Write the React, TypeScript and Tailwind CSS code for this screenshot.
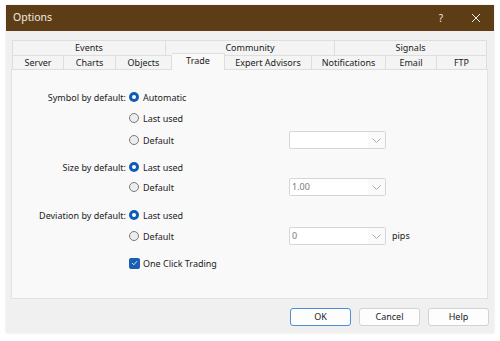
import React from "react";

const F = { fontFamily: '"Noto Sans", "Open Sans", Arial, sans-serif' };

function Radio({ checked, label }: { checked?: boolean; label: string }) {
  return (
    <div className="flex items-center gap-[4px]">
      {checked ? (
        <span className="w-[10px] h-[10px] rounded-full bg-[#0f5bb8] flex items-center justify-center">
          <span className="w-[4px] h-[4px] rounded-full bg-white" />
        </span>
      ) : (
        <span className="w-[10px] h-[10px] rounded-full border border-[#7b7b7b] bg-[#ededed]" />
      )}
      <span className="text-[9px] text-[#222] leading-none">{label}</span>
    </div>
  );
}

function Combo({ value }: { value?: string }) {
  return (
    <div className="w-[97px] h-[18px] rounded-[2px] border border-[#d6d6d6] bg-white flex items-center">
      <div className="flex-1 h-full flex items-center pl-[2px] text-[9px] text-[#7a7a7a]">{value}</div>
      <div className="w-[17px] h-full flex items-center justify-center bg-[#fafafa]">
        <svg width="9" height="5" viewBox="0 0 9 5">
          <path d="M0.5 0.5 L4.5 4.5 L8.5 0.5" fill="none" stroke="#a8a8a8" strokeWidth="1" />
        </svg>
      </div>
    </div>
  );
}

function Label({ text }: { text?: string }) {
  return <div className="text-right pr-[3px] text-[9px] text-[#222] leading-none">{text}</div>;
}

function Row({ label, children, combo, pips, mt }: { label?: string; children: React.ReactNode; combo?: React.ReactNode; pips?: boolean; mt: string }) {
  return (
    <div className={`grid grid-cols-[117px_160px_97px_auto] items-center h-[20px] ${mt}`}>
      <Label text={label} />
      <div>{children}</div>
      <div>{combo}</div>
      <div className="pl-[6px] text-[9px] text-[#222]">{pips ? "pips" : ""}</div>
    </div>
  );
}

export default function App() {
  const row1 = [
    { t: "Events", w: "w-[154px]" },
    { t: "Community", w: "w-[169px]" },
    { t: "Signals", w: "w-[152px]" },
  ];
  const row2 = [
    { t: "Server", w: "w-[52px]" },
    { t: "Charts", w: "w-[52px]" },
    { t: "Objects", w: "w-[56px]" },
    { t: "Trade", w: "w-[53px]", sel: true },
    { t: "Expert Advisors", w: "w-[87px]" },
    { t: "Notifications", w: "w-[74px]" },
    { t: "Email", w: "w-[51px]" },
    { t: "FTP", w: "w-[50px]" },
  ];
  return (
    <div className="w-[500px] h-[341px] bg-white pt-[5px] px-[6px]" style={F}>
      <div className="w-[488px] h-[328px] flex flex-col shadow-[0_0_2px_rgba(0,0,0,0.12)]">
        <div className="h-[26px] bg-[#5d3d15] flex items-center pl-[7px] text-[#f1ebe3]">
          <span className="text-[10.5px] flex-1">Options</span>
          <span className="text-[10px] w-[20px] text-center mr-[20px]">?</span>
          <svg width="10" height="10" viewBox="0 0 10 10" className="mr-[13px]">
            <path d="M1 1 L9 9 M9 1 L1 9" stroke="#f1ebe3" strokeWidth="1" />
          </svg>
        </div>
        <div className="flex-1 bg-[#f0f0f0] pt-[9px] px-[5px] flex flex-col">
          <div className="ml-[1px] w-[475px] flex h-[15px]">
            {row1.map((r, i) => (
              <div
                key={r.t}
                className={`${r.w} h-full bg-[#f4f4f4] border-t border-r border-[#dedede] ${i === 0 ? "border-l" : ""} flex items-center justify-center text-[9px] text-[#222]`}
              >
                {r.t}
              </div>
            ))}
          </div>
          <div className="ml-[1px] w-[475px] flex h-[15px] items-end relative z-10">
            {row2.map((r, i) =>
              r.sel ? (
                <div
                  key={r.t}
                  className={`${r.w} h-[17px] bg-[#f9f9f9] border-t border-r border-[#dedede] flex items-center justify-center text-[9px] text-[#222] pb-[3px]`}
                >
                  {r.t}
                </div>
              ) : (
                <div
                  key={r.t}
                  className={`${r.w} h-full bg-[#f4f4f4] border-t border-r border-b border-[#dedede] ${i === 0 ? "border-l" : ""} flex items-center justify-center text-[9px] text-[#222]`}
                >
                  {r.t}
                </div>
              )
            )}
          </div>
          <div className="w-[477px] h-[230px] bg-[#f9f9f9] border border-[#e2e2e2] -mt-[1px] pt-[17px]">
            <Row label="Symbol by default:" mt="mt-0">
              <Radio checked label="Automatic" />
            </Row>
            <Row mt="mt-[1px]">
              <Radio label="Last used" />
            </Row>
            <Row mt="mt-[2px]" combo={<Combo />}>
              <Radio label="Default" />
            </Row>
            <Row label="Size by default:" mt="mt-[7px]">
              <Radio checked label="Last used" />
            </Row>
            <Row mt="mt-0" combo={<Combo value="1.00" />}>
              <Radio label="Default" />
            </Row>
            <Row label="Deviation by default:" mt="mt-[8px]">
              <Radio checked label="Last used" />
            </Row>
            <Row mt="mt-[1px]" combo={<Combo value="0" />} pips>
              <Radio label="Default" />
            </Row>
            <Row mt="mt-[7px]">
              <div className="flex items-center gap-[3px]">
                <span className="w-[11px] h-[11px] rounded-[2px] bg-[#1a5fb4] flex items-center justify-center">
                  <svg width="7" height="6" viewBox="0 0 7 6">
                    <path d="M1 3 L2.8 4.8 L6 1.2" fill="none" stroke="#dfe9f7" strokeWidth="1" />
                  </svg>
                </span>
                <span className="text-[9px] text-[#222] leading-none">One Click Trading</span>
              </div>
            </Row>
          </div>
          <div className="mt-[9px] flex justify-end gap-[8px]">
            <button className="w-[61px] h-[18px] rounded-[3px] bg-[#fdfdfd] border border-[#4d8fd6] text-[9px] text-[#222]">OK</button>
            <button className="w-[61px] h-[18px] rounded-[3px] bg-[#fdfdfd] border border-[#d3d3d3] text-[9px] text-[#222]">Cancel</button>
            <button className="w-[61px] h-[18px] rounded-[3px] bg-[#fdfdfd] border border-[#d3d3d3] text-[9px] text-[#222]">Help</button>
          </div>
        </div>
      </div>
    </div>
  );
}
